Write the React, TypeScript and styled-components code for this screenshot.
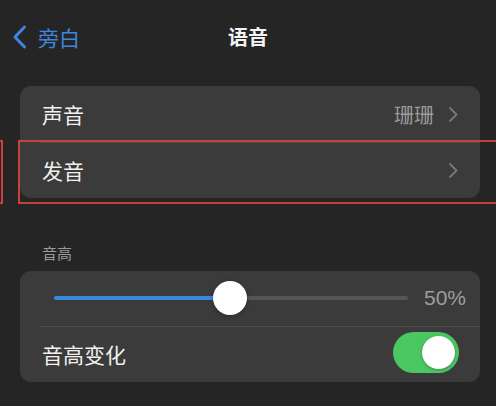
import React from 'react';
import styled, { createGlobalStyle } from 'styled-components';

const GlobalStyle = createGlobalStyle`
    html, body {
        margin: 0;
        padding: 0;
        background: #252525;
    }
    body {
        font-family: "Noto Sans CJK SC", "Noto Sans", "Liberation Sans", sans-serif;
        color: #f0f0f0;
    }
`;

const Screen = styled.div`
    position: relative;
    width: 496px;
    height: 406px;
    overflow: hidden;
    background: #252525;
`;

// Nav bar
const NavBar = styled.div`
    display: grid;
    grid-template-columns: 1fr auto 1fr;
    align-items: center;
    height: 74px;
    padding: 0 12px;
    box-sizing: border-box;
`;

const BackLink = styled.div`
    display: flex;
    align-items: center;
    gap: 10px;
    color: #3d86df;
    font-size: 21px;
    margin-top: -1px;
`;

const Title = styled.div`
    font-size: 20px;
    font-weight: 700;
    color: #f4f4f4;
    margin-top: -2px;
`;

const Content = styled.div`
    display: flex;
    flex-direction: column;
    padding: 12px 16px 0 20px;
`;

const Card = styled.div`
    background: #3b3b3b;
    border-radius: 11px;
    overflow: hidden;
`;

const Row = styled.div<{ divider?: boolean }>`
    position: relative;
    display: flex;
    align-items: center;
    height: 56px;
    padding: 0 22px;
    box-sizing: border-box;
    font-size: 21px;
    &::before {
        content: '';
        display: ${({ divider }) => (divider ? 'block' : 'none')};
        position: absolute;
        top: 0;
        left: 20px;
        right: 0;
        height: 1px;
        background: #4b4b4b;
    }
`;

const Label = styled.span`
    flex: 1;
    color: #f0f0f0;
`;

const Detail = styled.span`
    color: #9b9b9b;
    font-size: 20px;
    margin-right: 14px;
`;

const SectionHeader = styled.div`
    font-size: 15px;
    color: #9a9a9a;
    padding: 0 22px;
    margin: 45px 0 8px;
    line-height: 20px;
`;

const SliderRow = styled.div`
    display: flex;
    align-items: center;
    height: 56px;
    padding: 0 14px 0 34px;
    gap: 16px;
    margin-top: -1px;
`;

const Track = styled.div`
    position: relative;
    flex: 1;
    height: 4px;
    border-radius: 2px;
    background: #555555;
`;

const Fill = styled.div`
    position: absolute;
    left: 0;
    top: 0;
    bottom: 0;
    border-radius: 2px;
    background: #3a87e4;
`;

const Thumb = styled.div`
    position: absolute;
    top: 50%;
    width: 34px;
    height: 34px;
    margin: -17px 0 0 -18px;
    border-radius: 50%;
    background: #ffffff;
    box-shadow: 0 1px 4px rgba(0, 0, 0, 0.35);
`;

const Percent = styled.span`
    font-family: "Liberation Sans", "Noto Sans", sans-serif;
    font-size: 21px;
    color: #9d9d9d;
`;

const Toggle = styled.div<{ on: boolean }>`
    position: relative;
    width: 66px;
    height: 41px;
    border-radius: 21px;
    background: ${({ on }) => (on ? '#4bc762' : '#555')};
    margin-right: -1px;
    margin-top: -3px;
`;

const Knob = styled.div<{ on: boolean }>`
    position: absolute;
    top: 4px;
    left: ${({ on }) => (on ? '29px' : '4px')};
    width: 33px;
    height: 33px;
    border-radius: 50%;
    background: #ffffff;
    box-shadow: 0 1px 3px rgba(0, 0, 0, 0.3);
`;

// Red annotation boxes drawn over the screenshot
const Marker = styled.div`
    position: absolute;
    border: 2px solid #c8413f;
    box-sizing: border-box;
`;

const Chevron: React.FC<{ color?: string; size?: number }> = ({ color = '#777', size = 10 }) => (
    <svg width={size} height={size * 1.7} viewBox="0 0 10 17" fill="none">
        <path d="M2 2l6.5 6.5L2 15" stroke={color} strokeWidth="1.8" strokeLinecap="round" strokeLinejoin="round" />
    </svg>
);

const App: React.FC = () => {
    const pitch = 50;
    return (
        <Screen>
            <GlobalStyle />
            <NavBar>
                <BackLink>
                    <svg width="16" height="26" viewBox="0 0 16 26" fill="none">
                        <path d="M12.5 3L3 13l9.5 10" stroke="#3d86df" strokeWidth="3" strokeLinecap="round" strokeLinejoin="round" />
                    </svg>
                    旁白
                </BackLink>
                <Title>语音</Title>
                <div />
            </NavBar>
            <Content>
                <Card>
                    <Row>
                        <Label>声音</Label>
                        <Detail>珊珊</Detail>
                        <Chevron />
                    </Row>
                    <Row divider>
                        <Label>发音</Label>
                        <Chevron />
                    </Row>
                </Card>
                <SectionHeader>音高</SectionHeader>
                <Card>
                    <SliderRow>
                        <Track>
                            <Fill style={{ width: `${pitch}%` }} />
                            <Thumb style={{ left: `${pitch}%` }} />
                        </Track>
                        <Percent>{pitch}%</Percent>
                    </SliderRow>
                    <Row divider>
                        <Label>音高变化</Label>
                        <Toggle on>
                            <Knob on />
                        </Toggle>
                    </Row>
                </Card>
            </Content>
            <Marker style={{ left: 18, top: 140, width: 490, height: 64 }} />
            <Marker style={{ left: -10, top: 140, width: 13, height: 64 }} />
        </Screen>
    );
};

export default App;
